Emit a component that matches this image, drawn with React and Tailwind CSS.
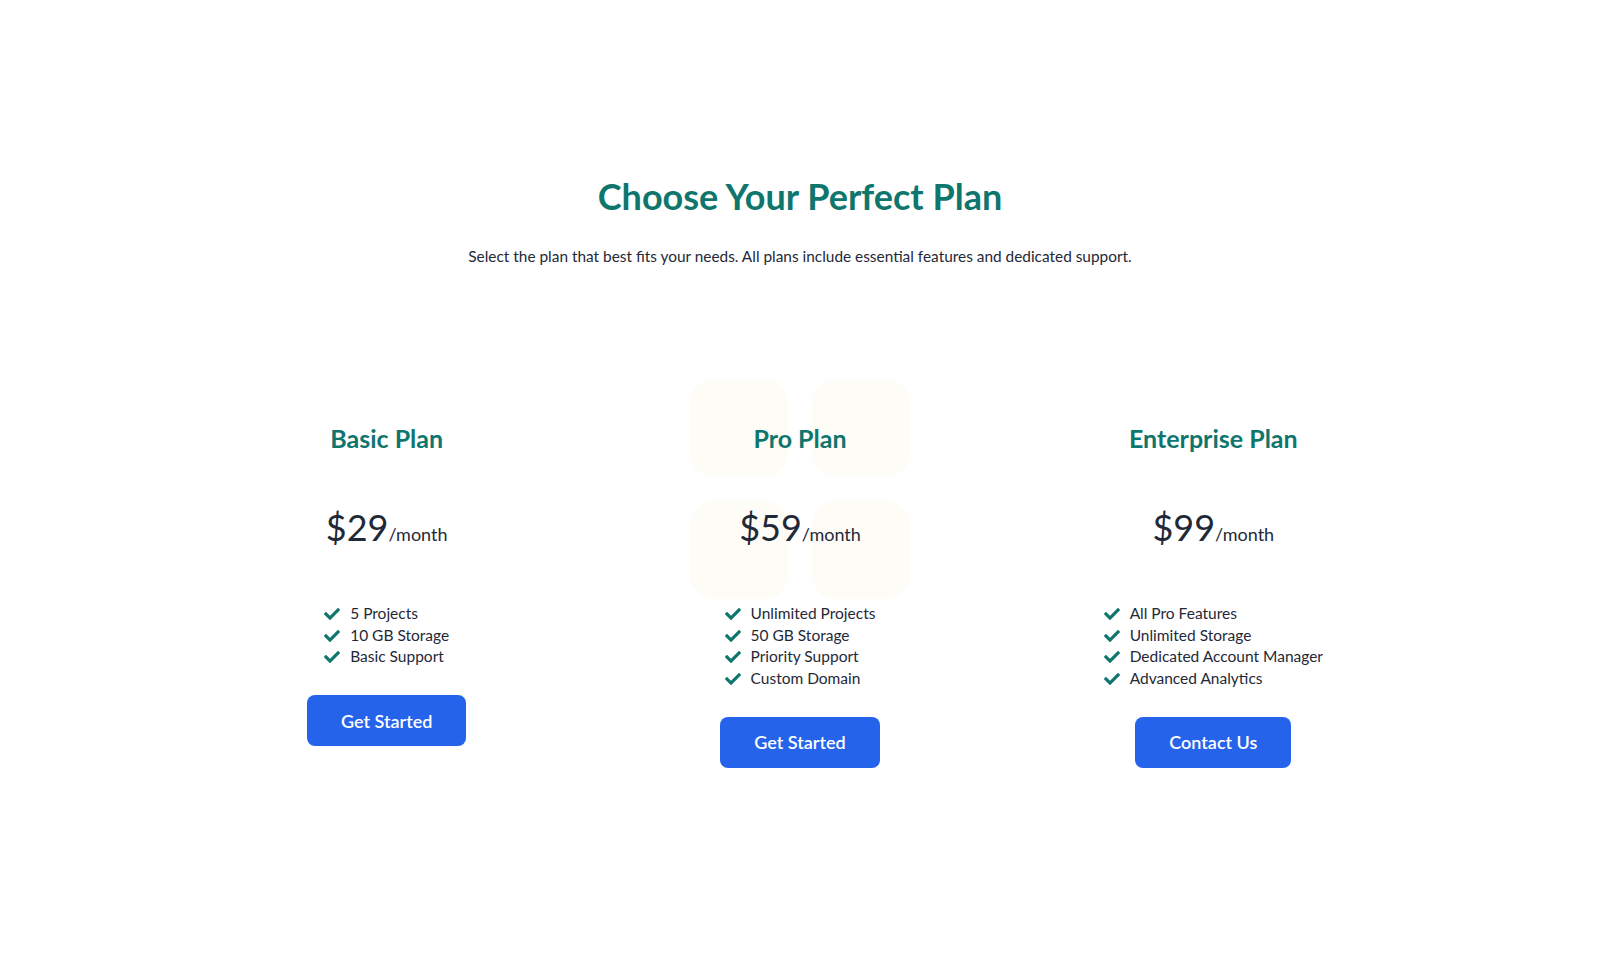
import React from 'react';
import { FaCheck } from 'react-icons/fa';

const plans = [
  {
    name: 'Basic Plan',
    price: '$29',
    features: ['5 Projects', '10 GB Storage', 'Basic Support'],
    cta: 'Get Started',
  },
  {
    name: 'Pro Plan',
    price: '$59',
    features: ['Unlimited Projects', '50 GB Storage', 'Priority Support', 'Custom Domain'],
    cta: 'Get Started',
    featured: true,
  },
  {
    name: 'Enterprise Plan',
    price: '$99',
    features: ['All Pro Features', 'Unlimited Storage', 'Dedicated Account Manager', 'Advanced Analytics'],
    cta: 'Contact Us',
  },
];

const PlanCard = ({ plan }) => {
  return (
    <div className="relative pt-[43px] text-center">
      {plan.featured && (
        // soft tiles behind the featured plan
        <div className="absolute left-1/2 top-0 -translate-x-1/2 w-[220px] grid grid-cols-[98px_98px] gap-6">
          <div className="w-[98px] h-[98px] rounded-3xl bg-[#fdfcf6]" />
          <div className="w-[98px] h-[98px] rounded-3xl bg-[#fdfcf6]" />
          <div className="w-[98px] h-[98px] rounded-3xl bg-[#fdfcf6]" />
          <div className="w-[98px] h-[98px] rounded-3xl bg-[#fdfcf6]" />
        </div>
      )}

      <div className="relative">
        <h3 className="text-[25px] leading-8 font-bold text-[#0f766e]">{plan.name}</h3>

        <div className="mt-[53px] flex items-baseline justify-center text-[#1f2937]">
          <span className="text-4xl leading-10">{plan.price}</span>
          <span className="text-lg">/month</span>
        </div>

        <ul className="mt-[55px] inline-block text-left text-[15.5px] leading-[21.7px] text-[#1f2937]">
          {plan.features.map((f) => (
            <li key={f} className="flex items-center gap-2.5">
              <FaCheck size={16} className="text-[#0f766e]" />
              <span>{f}</span>
            </li>
          ))}
        </ul>

        <div className="mt-6">
          <button className="bg-[#2563eb] text-white text-lg font-semibold px-[34px] h-[51px] rounded-lg">
            {plan.cta}
          </button>
        </div>
      </div>
    </div>
  );
};

const App = () => {
  return (
    <div className="min-h-screen bg-white font-['Lato',sans-serif]">
      <section className="max-w-7xl mx-auto px-8 pt-[176px] pb-24">
        <h2 className="text-4xl leading-10 font-bold text-[#0f766e] text-center">
          Choose Your Perfect Plan
        </h2>
        <p className="mt-7 text-center text-[15.4px] leading-6 text-[#1f2937]">
          Select the plan that best fits your needs. All plans include essential features and dedicated support.
        </p>

        <div className="mt-[111px] grid grid-cols-3 gap-6 items-start">
          {plans.map((plan) => (
            <PlanCard key={plan.name} plan={plan} />
          ))}
        </div>
      </section>
    </div>
  );
};

export default App;
